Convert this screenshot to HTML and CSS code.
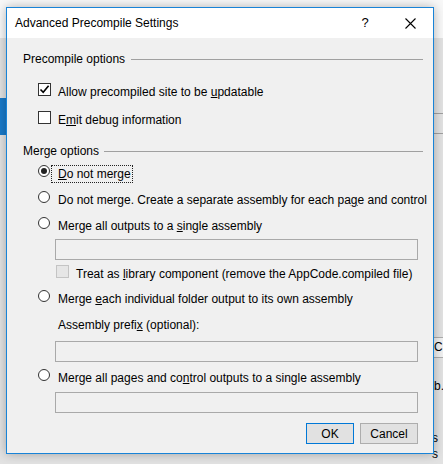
FILE: index.html
```html
<!DOCTYPE html>
<html>
<head>
<meta charset="utf-8">
<title>Advanced Precompile Settings</title>
<link rel="stylesheet" href="styles.css">
</head>
<body>
<!-- bits of the window behind the dialog -->
<div class="desk-tab"></div>
<div class="desk-rule r1"></div>
<div class="desk-rule r2"></div>
<div class="desk-btn">C</div>
<div class="desk-text t1">b.</div>
<div class="desk-text t2">s s</div>

<div class="dialog">
  <div class="titlebar">
    <span class="title">Advanced Precompile Settings</span>
    <span class="help">?</span>
    <span class="close">
      <svg width="11" height="11" viewBox="0 0 11 11"><path d="M0.5 0.5L10.5 10.5M10.5 0.5L0.5 10.5" stroke="#000" stroke-width="1.1" fill="none"/></svg>
    </span>
  </div>

  <div class="content">
    <div class="group-head"><span>Precompile options</span><i class="rule"></i></div>

    <div class="opt mt16">
      <span class="check">
        <svg width="11" height="11" viewBox="0 0 11 11"><path d="M1.5 5.5L4.2 8.3L9.6 1.8" stroke="#000" stroke-width="1.6" fill="none"/></svg>
      </span>
      <span class="lbl">Allow precompiled site to be <u>u</u>pdatable</span>
    </div>
    <div class="opt mt10">
      <span class="check"></span>
      <span class="lbl">E<u>m</u>it debug information</span>
    </div>

    <div class="group-head mt14"><span>Merge options</span><i class="rule small-gap"></i></div>

    <div class="opt mt6">
      <span class="radio on"></span>
      <span class="lbl focus"><u>D</u>o not merge</span>
    </div>
    <div class="opt mt8">
      <span class="radio"></span>
      <span class="lbl">Do not merge. Create a separate assembly for each pa<u>g</u>e and control</span>
    </div>
    <div class="opt mt8">
      <span class="radio"></span>
      <span class="lbl">Merge all outputs to a <u>s</u>ingle assembly</span>
    </div>
    <div class="field mt4"></div>
    <div class="opt sub mt5">
      <span class="check off"></span>
      <span class="lbl">Treat as <u>l</u>ibrary component (remove the AppCode.compiled file)</span>
    </div>
    <div class="opt mt7">
      <span class="radio"></span>
      <span class="lbl">Merge <u>e</u>ach individual folder output to its own assembly</span>
    </div>
    <div class="note mt9">Assembly prefi<u>x</u> (optional):</div>
    <div class="field mt8"></div>
    <div class="opt mt7">
      <span class="radio"></span>
      <span class="lbl">Merge all pages and co<u>n</u>trol outputs to a single assembly</span>
    </div>
    <div class="field mt5"></div>

    <div class="buttons">
      <span class="btn btn-ok">OK</span>
      <span class="btn btn-cancel">Cancel</span>
    </div>
  </div>
</div>
</body>
</html>
```

FILE: styles.css
```css
*{
	margin: 0;
	padding: 0;
	box-sizing: border-box;
}
body{
	width: 443px;
	height: 464px;
	overflow: hidden;
	position: relative;
	padding: 7px 0 0 6px;
	background: linear-gradient(#f8f8f8 0, #f8f8f8 38px, #e2e2e2 38px);
	font-family: "Liberation Sans", Arial, sans-serif;
	font-size: 12px;
	line-height: 16px;
	color: #000;
}

/* window behind */
.desk-tab{
	position: absolute;
	left: 0;
	top: 98px;
	width: 6px;
	height: 37px;
	background: #1a7ac9;
}
.desk-rule{
	position: absolute;
	left: 428px;
	width: 15px;
	height: 1px;
	background: #a0a0a0;
}
.r1{ top: 113px; }
.r2{ top: 133px; }
.desk-btn{
	position: absolute;
	left: 420px;
	top: 337px;
	width: 40px;
	height: 21px;
	border: 1px solid #adadad;
	background: #f0f0f0;
	padding: 1px 0 0 13px;
}
.desk-text{
	position: absolute;
	left: 434px;
}
.t1{ top: 378px; }
.t2{ top: 430px; left: 432px; }

/* dialog */
.dialog{
	position: relative;
	z-index: 1;
	width: 428px;
	height: 447px;
	border: 1px solid #1883d7;
	background: #f0f0f0;
	box-shadow: 0 0 10px rgba(0,0,0,.28);
}
.titlebar{
	height: 30px;
	background: #fff;
	display: flex;
	align-items: center;
	padding-left: 8px;
}
.title{
	flex: 1;
}
.help{
	width: 10px;
	text-align: center;
	font-size: 13px;
	margin-right: 35px;
}
.close{
	display: flex;
	width: 11px;
	height: 11px;
	margin-right: 17px;
}
.content{
	padding: 13px 15px 0 16px;
}
.group-head{
	display: flex;
	align-items: center;
	height: 16px;
	margin-right: -5px;
}
.group-head .rule{
	flex: 1;
	height: 1px;
	background: #a0a0a0;
	margin-left: 6px;
}
.group-head .small-gap{
	margin-left: 5px;
}
.opt{
	display: flex;
	align-items: flex-start;
	margin-left: 15px;
	white-space: nowrap;
}
.opt.sub{
	margin-left: 33px;
}
.lbl{
	border: 1px dotted transparent;
	padding: 0 1px 0 6px;
}
.lbl.focus{
	border-color: #222;
}
.check{
	flex-shrink: 0;
	display: flex;
	align-items: center;
	justify-content: center;
	width: 13px;
	height: 13px;
	border: 1px solid #333;
	background: #fff;
}
.check.off{
	border-color: #c4c4c4;
	background: #e6e6e6;
}
.radio{
	flex-shrink: 0;
	display: flex;
	align-items: center;
	justify-content: center;
	width: 12px;
	height: 12px;
	margin-right: 1px;
	border: 1px solid #333;
	border-radius: 50%;
	background: #fff;
}
.radio.on::after{
	content: "";
	width: 6px;
	height: 6px;
	border-radius: 50%;
	background: #222;
}
.note{
	margin-left: 35px;
}
.field{
	height: 21px;
	margin-left: 32px;
	border: 1px solid #a9a9a9;
	background: #f0f0f0;
}
.buttons{
	display: flex;
	justify-content: flex-end;
	gap: 6px;
	margin-top: 10px;
}
.btn{
	display: flex;
	align-items: center;
	justify-content: center;
	height: 21px;
	border: 1px solid #adadad;
	background: #e1e1e1;
}
.btn-ok{
	width: 48px;
	border-color: #0078d7;
}
.btn-cancel{
	width: 58px;
}

.mt4{ margin-top: 4px; }
.mt5{ margin-top: 5px; }
.mt6{ margin-top: 6px; }
.mt7{ margin-top: 7px; }
.mt8{ margin-top: 8px; }
.mt9{ margin-top: 9px; }
.mt10{ margin-top: 10px; }
.mt14{ margin-top: 14px; }
.mt16{ margin-top: 16px; }
```
